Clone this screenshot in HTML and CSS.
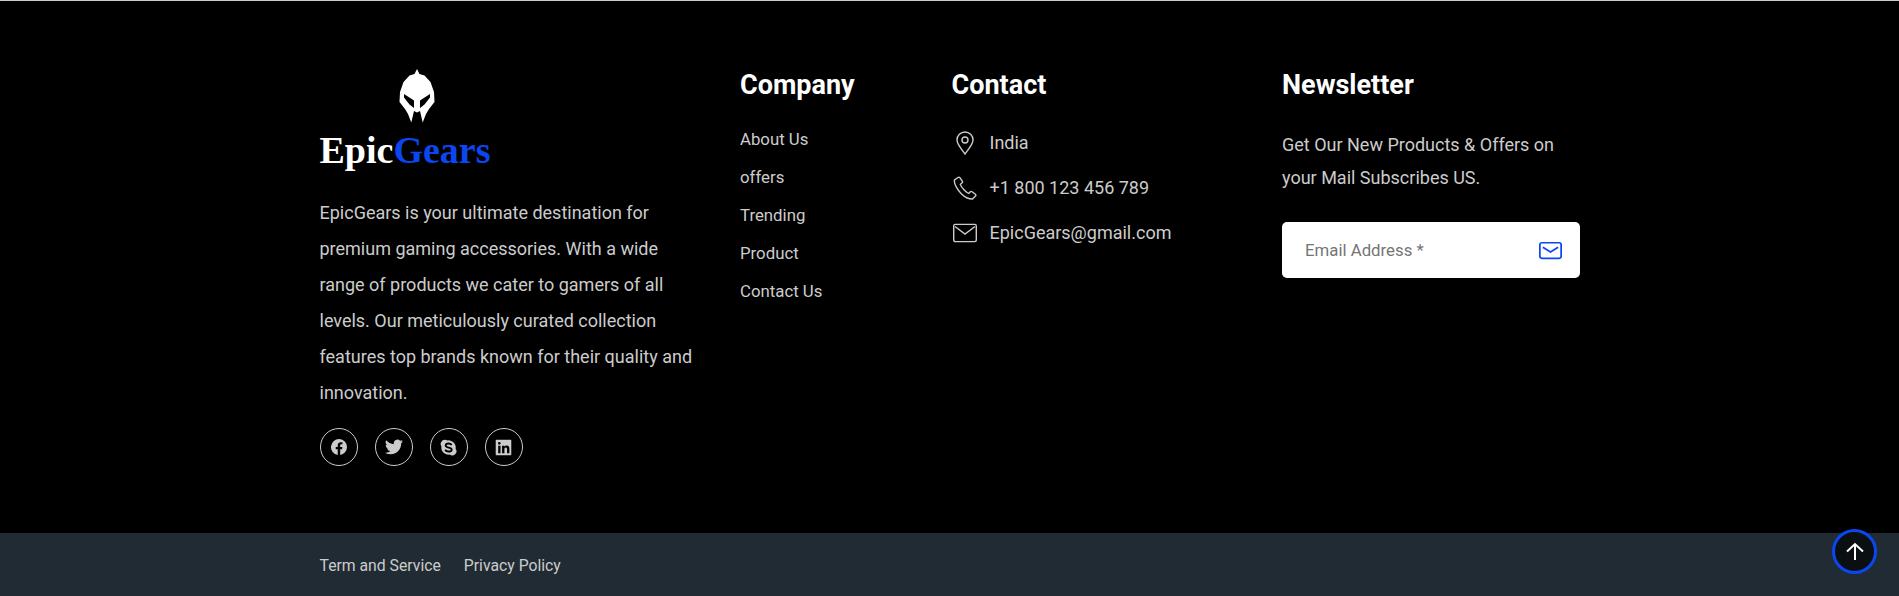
FILE: index.html
```html
<!DOCTYPE html>
<html lang="en">
<head>
    <meta charset="UTF-8">
    <meta name="viewport" content="width=device-width, initial-scale=1.0">
    <title>EpicGears</title>
    <link rel="stylesheet" href="styles.css">
</head>
<body>
    <footer class="footer">
        <div class="footer-main">
            <div class="about">
                <div class="logo">
                    <svg class="logo-mark" viewBox="9.500 5 35 54" width="36" height="54">
                        <path fill="#fff" fill-rule="evenodd" d="M27 5l2.500 5 5 1.500 6 6.500 3.500 10 .5 10-5.500 7-3 5-3.300 8.500-2.700-11.500-3 1.500-3-1.500-2.700 11.500L18 50l-3-5-5.500-7 .5-10 3.500-10 6-6.500 5-1.500zM14 30l10 6.500V44l-4.500-3.500-5.500-7zM40 30l-10 6.500V44l4.500-3.500 5.500-7z"/>
                    </svg>
                    <div class="logo-name">Epic<span>Gears</span></div>
                </div>
                <p class="about-text">EpicGears is your ultimate destination for premium gaming accessories. With a wide range of products we cater to gamers of all levels. Our meticulously curated collection features top brands known for their quality and innovation.</p>
                <div class="socials">
                    <a class="social" href="#"><svg viewBox="0 0 24 24" width="16" height="16"><path fill="#ccc" d="M24 12a12 12 0 1 0-13.900 11.900v-8.400H7.100V12h3V9.400c0-3 1.800-4.700 4.500-4.700 1.300 0 2.700.2 2.700.2v3h-1.500c-1.500 0-2 .9-2 1.900V12h3.300l-.5 3.500h-2.800v8.400A12 12 0 0 0 24 12z"/></svg></a>
                    <a class="social" href="#"><svg viewBox="0 0 24 24" width="18" height="18"><path fill="#ccc" d="M23.950 4.570a10 10 0 0 1-2.820.77 4.960 4.960 0 0 0 2.160-2.720 10 10 0 0 1-3.130 1.180 4.920 4.920 0 0 0-8.380 4.480A13.970 13.970 0 0 1 1.670 3.150a4.920 4.920 0 0 0 1.520 6.570 4.900 4.900 0 0 1-2.230-.62v.06a4.920 4.920 0 0 0 3.950 4.830 5 5 0 0 1-2.210.08 4.940 4.940 0 0 0 4.600 3.420A9.870 9.870 0 0 1 0 19.540a14 14 0 0 0 7.560 2.210c9.050 0 14-7.500 14-13.980 0-.21 0-.42-.02-.63a9.940 9.940 0 0 0 2.410-2.570z"/></svg></a>
                    <a class="social" href="#"><svg viewBox="0 0 24 24" width="17" height="17"><path fill="#ccc" d="M7 1a6 6 0 0 1 3.400 1 10 10 0 0 1 11.600 11.600 6 6 0 0 1-8.400 8.400A10 10 0 0 1 2 10.400 6 6 0 0 1 7 1z"/><path fill="none" stroke="#000" stroke-width="2.600" d="M16.500 8.500C15.500 6.800 13.500 6.400 12 6.400c-2 0-4 1-4 2.900 0 4 8.500 2 8.500 5.700 0 1.800-2 2.700-4.400 2.700-2 0-3.900-.7-4.800-2.500"/></svg></a>
                    <a class="social" href="#"><svg viewBox="0 0 24 24" width="17" height="17"><path fill="#ccc" fill-rule="evenodd" d="M2 1h20a1 1 0 0 1 1 1v20a1 1 0 0 1-1 1H2a1 1 0 0 1-1-1V2a1 1 0 0 1 1-1zM4.500 9.500V20h3.300V9.500zM6.100 4.200a1.900 1.900 0 1 0 0 3.800 1.900 1.900 0 0 0 0-3.800zM10 9.500V20h3.300v-5.200c0-1.400.3-2.700 2-2.700s1.700 1.600 1.700 2.800V20h3.300v-5.800c0-2.800-.6-5-3.900-5-1.600 0-2.600.9-3.100 1.700V9.500z"/></svg></a>
                </div>
            </div>

            <div class="company">
                <h3>Company</h3>
                <ul class="links">
                    <li><a href="#">About Us</a></li>
                    <li><a href="#">offers</a></li>
                    <li><a href="#">Trending</a></li>
                    <li><a href="#">Product</a></li>
                    <li><a href="#">Contact Us</a></li>
                </ul>
            </div>

            <div class="contact">
                <h3>Contact</h3>
                <div class="contact-row">
                    <svg viewBox="0 0 24 24" width="24" height="24" fill="none" stroke="#ccc" stroke-width="1.400"><path d="M12 23c-1-2-8-9-8-14a8 8 0 0 1 16 0c0 5-7 12-8 14z"/><circle cx="12" cy="9" r="3"/></svg>
                    <span>India</span>
                </div>
                <div class="contact-row">
                    <svg viewBox="0 0 24 24" width="24" height="24" fill="none" stroke="#ccc" stroke-width="1.400"><path d="M5 1.500L1.500 4c-1 4 4 11 7 14s7 5 11 5l3-3c.5-.6.400-1.200-.1-1.700l-3.400-2.600c-.7-.5-1.200-.4-1.700.1l-1.500 1.600c-2.500-.7-7.500-6-8.500-9l1.800-1.600c.5-.5.6-1 .2-1.600L6.900 1.700c-.5-.6-1.200-.7-1.900-.2z"/></svg>
                    <span>+1 800 123 456 789</span>
                </div>
                <div class="contact-row">
                    <svg viewBox="0 0 24 24" width="24" height="24" fill="none" stroke="#ccc" stroke-width="1.400"><rect x=".7" y="3.400" width="22.600" height="17.200" rx="1.500"/><path d="M2 5.500l10 7.500 10-7.500"/></svg>
                    <span>EpicGears@gmail.com</span>
                </div>
            </div>

            <div class="newsletter">
                <h3>Newsletter</h3>
                <p class="newsletter-text">Get Our New Products &amp; Offers on your Mail Subscribes US.</p>
                <div class="email-box">
                    <input type="text" placeholder="Email Address *">
                    <svg viewBox="0 0 24 24" width="23" height="23" fill="none" stroke="#0a47f0" stroke-width="1.800"><rect x=".9" y="3.900" width="22.200" height="16.200" rx="2"/><path d="M4 8.500l8 5L20 8.500"/></svg>
                </div>
            </div>
        </div>

        <div class="footer-bottom">
            <div class="bottom-links">
                <a href="#">Term and Service</a>
                <a href="#">Privacy Policy</a>
            </div>
        </div>
    </footer>

    <a class="to-top" href="#">
        <svg viewBox="0 0 24 24" width="24" height="24" fill="none" stroke="#fff" stroke-width="2"><path d="M12 20V4M4 11.500L12 4l8 7.500"/></svg>
    </a>
</body>
</html>
```

FILE: styles.css
```css
body {
    font-family: 'Roboto', sans-serif;
    margin: 0;
    padding: 0;
    background: #000;
    color: #ccc;
    overflow: hidden;
}
a {
    color: inherit;
    text-decoration: none;
}
.footer {
    height: 596px;
    display: flex;
    flex-direction: column;
    border-top: 1px solid #ccc;
    box-sizing: border-box;
}
.footer-main {
    flex: 1;
    display: flex;
    padding: 68px 0 0 319.500px;
}
h3 {
    font-size: 27px;
    font-weight: 700;
    line-height: 32px;
    color: #fff;
    margin: 0;
}
.about {
    width: 380px;
    margin-right: 40.500px;
}
.logo {
    display: flex;
    flex-direction: column;
    width: 170px;
}
.logo-mark {
    align-self: flex-start;
    margin-left: 79.500px;
}
.logo-name {
    font-family: 'Liberation Serif', serif;
    font-size: 38px;
    font-weight: 700;
    line-height: 46px;
    margin-top: 4px;
    color: #fff;
    white-space: nowrap;
}
.logo-name span {
    color: #0a47f0;
}
.about-text {
    font-size: 18px;
    line-height: 36px;
    margin: 22px 0 0;
}
.socials {
    display: flex;
    gap: 17px;
    margin-top: 17px;
}
.social {
    width: 38px;
    height: 38px;
    box-sizing: border-box;
    border: 1px solid #ccc;
    border-radius: 50%;
    display: flex;
    align-items: center;
    justify-content: center;
}
.company {
    width: 211.500px;
}
.links {
    list-style: none;
    margin: 19px 0 0;
    padding: 0;
}
.links li {
    font-size: 16.800px;
    line-height: 38px;
}
.contact {
    width: 330.500px;
}
.contact-row {
    display: flex;
    align-items: center;
    gap: 12.500px;
    padding-left: 1.500px;
    font-size: 18px;
    height: 45px;
}
.contact h3 {
    margin-bottom: 19px;
}
.newsletter {
    width: 298px;
}
.newsletter-text {
    font-size: 18px;
    line-height: 33px;
    margin: 27px 0 0;
}
.email-box {
    display: flex;
    align-items: center;
    height: 56px;
    margin-top: 28px;
    padding: 0 18px 0 23px;
    background: #fff;
    border-radius: 5px;
}
.email-box input {
    flex: 1;
    min-width: 0;
    border: none;
    outline: none;
    background: none;
    padding: 0;
    font-family: inherit;
    font-size: 16.800px;
}
.email-box input::placeholder {
    color: #757575;
}
.footer-bottom {
    height: 63px;
    box-sizing: border-box;
    background: #212b33;
    display: flex;
    align-items: center;
    padding: 2px 0 0 319.500px;
}
.bottom-links {
    display: flex;
    gap: 23px;
    font-size: 15.750px;
}
.to-top {
    position: fixed;
    right: 22px;
    bottom: 22px;
    width: 45px;
    height: 45px;
    box-sizing: border-box;
    border: 3px solid #0a47f0;
    border-radius: 50%;
    background: #0a0f12;
    display: flex;
    align-items: center;
    justify-content: center;
}
```
